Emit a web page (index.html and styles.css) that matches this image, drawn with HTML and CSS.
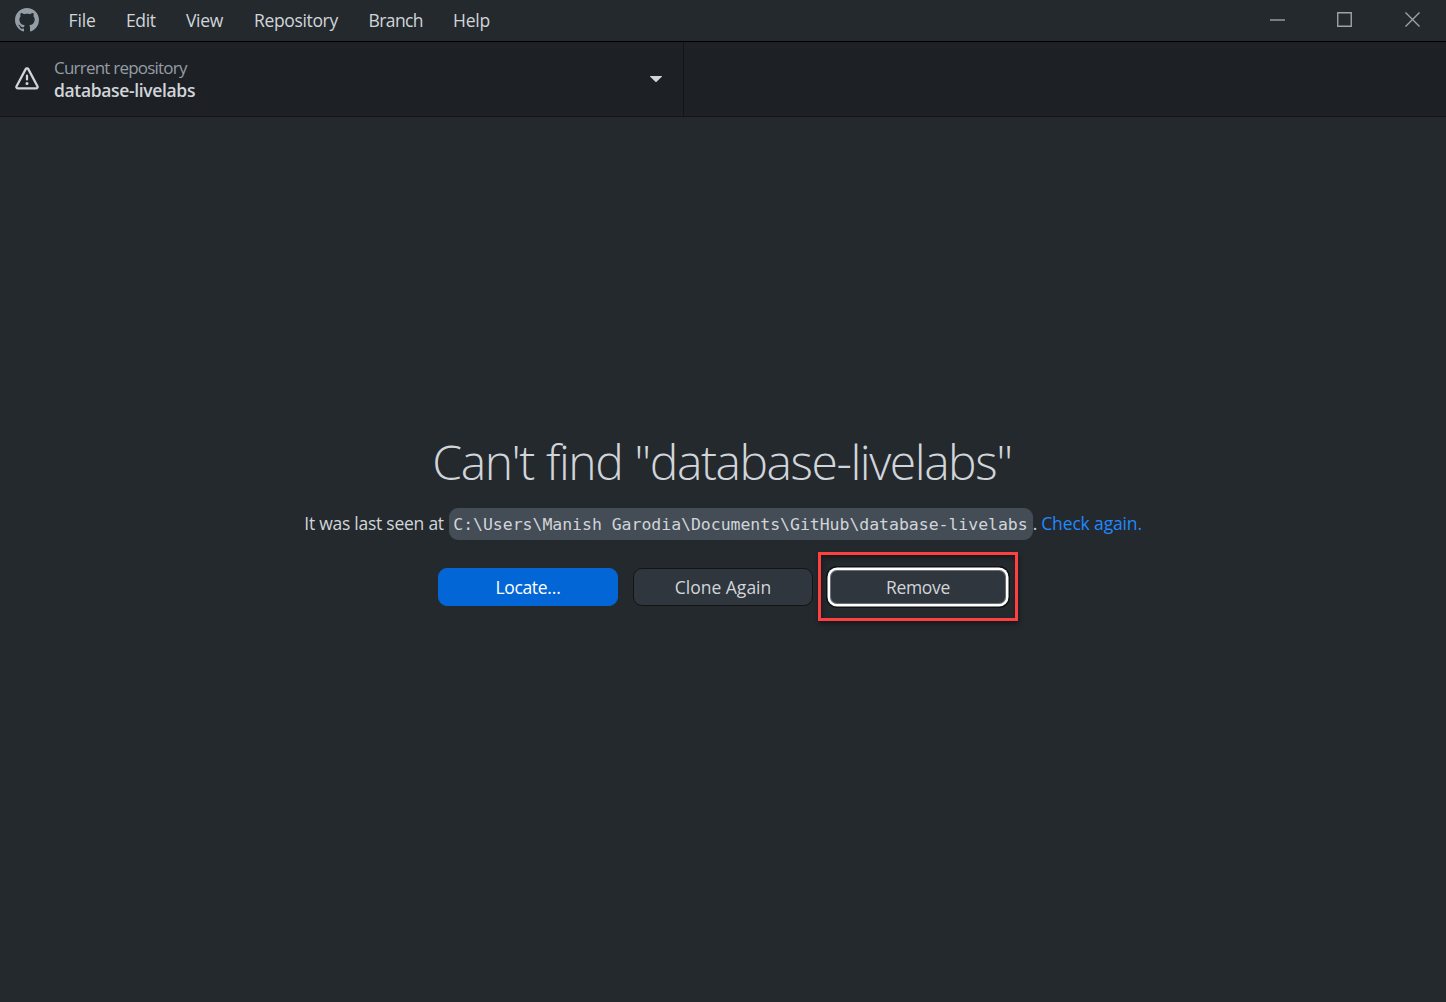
FILE: index.html
```html
<!DOCTYPE html>
<html lang="en">
<head>
<meta charset="utf-8">
<title>GitHub Desktop</title>
<link rel="stylesheet" href="styles.css">
</head>
<body>
<header class="titlebar">
  <svg class="logo" viewBox="0 0 16 16"><path d="M8 0C3.58 0 0 3.58 0 8c0 3.54 2.29 6.53 5.47 7.59.4.07.55-.17.55-.38 0-.19-.01-.82-.01-1.49-2.01.37-2.53-.49-2.69-.94-.09-.23-.48-.94-.82-1.13-.28-.15-.68-.52-.01-.53.63-.01 1.08.58 1.23.82.72 1.21 1.87.87 2.33.66.07-.52.28-.87.51-1.07-1.78-.2-3.64-.89-3.64-3.95 0-.87.31-1.59.82-2.15-.08-.2-.36-1.02.08-2.12 0 0 .67-.21 2.2.82.64-.18 1.32-.27 2-.27s1.36.09 2 .27c1.53-1.04 2.2-.82 2.2-.82.44 1.1.16 1.92.08 2.12.51.56.82 1.27.82 2.15 0 3.07-1.87 3.75-3.65 3.95.29.25.54.73.54 1.48 0 1.07-.01 1.93-.01 2.2 0 .21.15.46.55.38A8.01 8.01 0 0 0 16 8c0-4.42-3.58-8-8-8z"/></svg>
  <nav class="menu">
    <span class="menu-file">File</span>
    <span class="menu-edit">Edit</span>
    <span class="menu-view">View</span>
    <span class="menu-repository">Repository</span>
    <span class="menu-branch">Branch</span>
    <span class="menu-help">Help</span>
  </nav>
  <div class="controls">
    <svg viewBox="0 0 15 15"><path d="M0 8h15"/></svg>
    <svg viewBox="0 0 15 15"><path d="M.75.75h13.5v13.5H.75z"/></svg>
    <svg viewBox="0 0 15 15"><path d="M.5.5l14 14M14.5.5l-14 14"/></svg>
  </div>
</header>
<div class="toolbar">
  <div class="repository">
    <svg class="alert" viewBox="0 0 16 16"><path d="M6.457 1.047c.659-1.234 2.427-1.234 3.086 0l6.082 11.378A1.75 1.75 0 0 1 14.082 15H1.918a1.75 1.75 0 0 1-1.543-2.575Zm1.763.707a.25.25 0 0 0-.44 0L1.698 13.132a.25.25 0 0 0 .22.368h12.164a.25.25 0 0 0 .22-.368Zm.53 3.996v2.5a.75.75 0 0 1-1.5 0v-2.5a.75.75 0 0 1 1.5 0ZM9 11a1 1 0 1 1-2 0 1 1 0 0 1 2 0Z"/></svg>
    <div class="repository-text">
      <span class="caption">Current repository</span>
      <span class="name">database-livelabs</span>
    </div>
    <svg class="caret" viewBox="0 0 12 6"><path d="M.6 0h10.8c.6 0 .7.4.4.7L6.6 5.7a.9.9 0 0 1-1.2 0L.2.7C-.1.4 0 0 .6 0z"/></svg>
  </div>
</div>
<main class="missing">
  <h1>Can't find "database-livelabs"</h1>
  <p class="location"><span class="seen">It was last seen at</span><code>C:\Users\Manish Garodia\Documents\GitHub\database-livelabs</code><span class="dot">.</span><a class="check">Check again.</a></p>
  <div class="actions">
    <button class="primary">Locate…</button>
    <button class="clone">Clone Again</button>
    <div class="highlight"><button class="focused">Remove</button></div>
  </div>
</main>
</body>
</html>
```
FILE: styles.css
```css
* { box-sizing: border-box; }
body {
  margin: 0;
  height: 1002px;
  display: flex;
  flex-direction: column;
  overflow: hidden;
  background: #24292e;
  color: #d1d5da;
  font-family: "Open Sans", "Noto Sans", sans-serif;
  font-size: 17.5px;
  letter-spacing: -0.35px;
  white-space: nowrap;
}
.titlebar {
  flex: none;
  height: 42px;
  display: flex;
  align-items: center;
  padding: 0 26px 2px 15px;
  border-bottom: 1px solid #000;
}
.logo { width: 24px; height: 24px; fill: #959da5; }
.menu { display: flex; margin-left: 29.5px; line-height: 24px; padding-top: 1px; }
.menu-file { width: 57.5px; letter-spacing: -0.1px; }
.menu-edit { width: 60px; }
.menu-view { width: 68px; }
.menu-repository { width: 114.5px; }
.menu-branch { width: 84.5px; letter-spacing: -0.6px; }
.menu-help { letter-spacing: -0.2px; }
.controls { display: flex; margin-left: auto; }
.controls svg { width: 15px; height: 15px; margin-left: 53px; fill: none; stroke: #a0a2a4; stroke-width: 1.4; }
.controls svg:nth-child(2) { margin-left: 52px; }
.toolbar {
  flex: none;
  height: 75px;
  display: flex;
  background: #1d2125;
  border-bottom: 1px solid #141414;
}
.repository {
  width: 684px;
  display: flex;
  align-items: center;
  padding: 0 21px 0 15px;
  border-right: 1px solid #141414;
}
.alert { width: 24px; height: 24px; fill: #d1d5da; }
.repository-text { display: flex; flex-direction: column; margin-left: 15px; line-height: 22px; padding-bottom: 1px; }
.caption { color: #959da5; font-size: 17px; letter-spacing: -0.78px; }
.name { font-weight: 600; }
.caret { width: 12px; height: 6px; margin-left: auto; fill: #d1d5da; }
.missing { display: flex; flex-direction: column; align-items: center; padding-top: 313px; }
h1 { margin: 0; padding-right: 2px; font-size: 48px; line-height: 64px; font-weight: 300; letter-spacing: -1.45px; word-spacing: 1px; }
.location { display: flex; align-items: center; margin: 14px 0 0; height: 32px; }
.location span, .check { padding-bottom: 2px; }
.seen { width: 144.5px; letter-spacing: -0.25px; }
code {
  width: 584px;
  height: 32px;
  padding: 1px 0 0 4.5px;
  line-height: 32px;
  border-radius: 9px;
  background: #444d56;
  font-family: "DejaVu Sans Mono", monospace;
  font-size: 16.5px;
  letter-spacing: -0.03px;
}
.dot { width: 8.5px; }
.check { width: 100.5px; color: #2188ff; letter-spacing: -0.15px; }
.actions { display: flex; align-items: flex-start; margin: 12px 0 0 10px; }
button {
  width: 180px;
  height: 38px;
  padding: 0;
  border: 1px solid #141414;
  border-radius: 9px;
  background: #2f363d;
  color: #d1d5da;
  font: inherit;
  letter-spacing: inherit;
  line-height: 36px;
}
.primary { margin: 16px 15px 0 0; border-color: #0366d6; background: #0366d6; color: #fff; }
.clone { margin: 16px 5px 0 0; letter-spacing: 0; }
.highlight {
  width: 200px;
  height: 69px;
  padding: 13px 0 0 7px;
  border: 3px solid #ff4040;
  box-shadow: 1px 3px 5px rgba(0, 0, 0, .4), inset 1px 3px 5px rgba(0, 0, 0, .4);
}
.focused {
  display: block;
  border: 2px solid #fff;
  box-shadow: 0 0 0 .5px #fff, 0 0 0 2px #101214, inset 0 0 0 1px #6c7176;
  line-height: 34px;
}
```
